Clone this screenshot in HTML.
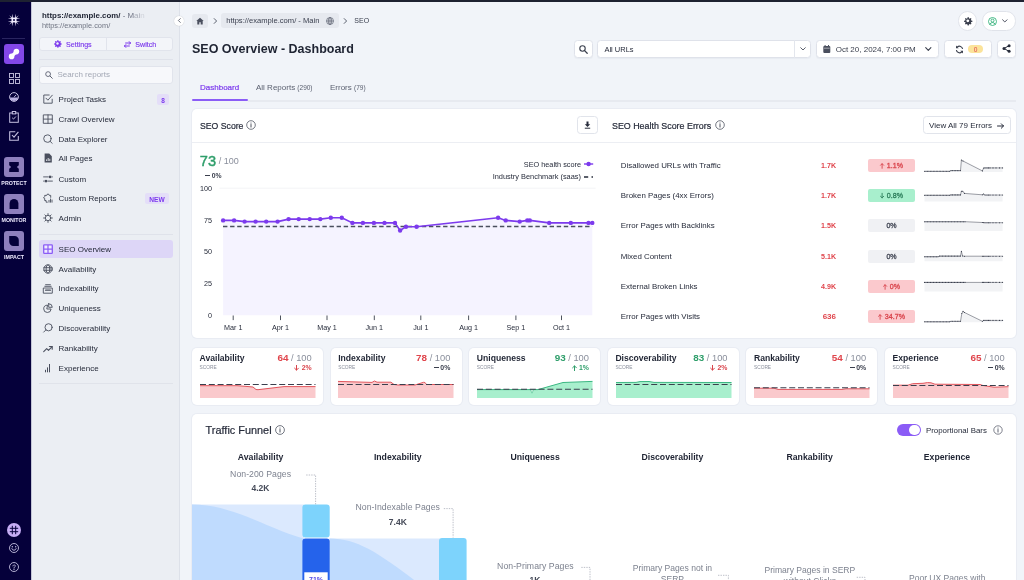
<!DOCTYPE html>
<html>
<head>
<meta charset="utf-8">
<title>SEO Overview - Dashboard</title>
<style>
*{box-sizing:border-box;margin:0;padding:0}
html,body{width:1024px;height:580px;overflow:hidden}
body{font-family:"Liberation Sans",sans-serif;background:#f1f4f9;color:#1f2433;position:relative;font-size:8px}
#app{position:absolute;left:0;top:0;width:1024px;height:580px;will-change:transform}
.a{position:absolute}
.t{position:absolute;white-space:nowrap;line-height:10px;height:10px}
.c{text-align:center}
.r{text-align:right}
.b{font-weight:700}
.card{position:absolute;background:#fff;border-radius:5px;box-shadow:0 0 0 1px rgba(226,230,238,.55)}
svg{position:absolute;overflow:visible}
</style>
</head>
<body>
<div id="app">
<div class="a" style="left:0px;top:0px;width:31px;height:580px;background:#05003a;"></div>
<div class="a" style="left:0px;top:0px;width:1024px;height:2px;background:#1e2231;"></div>
<div class="a" style="left:31px;top:2px;width:149px;height:578px;background:#ebeef3;border-right:1px solid #dde1e9;border-left:1px solid #c3c5d6;"></div>
<svg style="left:7px;top:13px;" width="14" height="14" viewBox="0 0 14 14"><g fill="#f3eeff">
<path d="M5.3 .8L6.2 7 5.3 13.2 4.4 7z"/><path d="M8.7 .8L9.6 7 8.7 13.2 7.8 7z"/>
<path d="M.8 5.3L7 4.4 13.2 5.3 7 6.2z"/><path d="M.8 8.7L7 7.8 13.2 8.7 7 9.6z"/>
<path d="M2.2 2.2L5 4.4 4.4 5zM11.8 2.2L9 4.4 9.6 5zM2.2 11.8L5 9.6 4.4 9zM11.8 11.8L9 9.6 9.6 9z"/></g></svg>
<div class="a" style="left:2px;top:38px;width:23px;height:1px;background:#2a2560;"></div>
<div class="a" style="left:4px;top:44px;width:20px;height:20px;background:#8347e8;border-radius:3px;"></div>
<svg style="left:8px;top:48px;" width="12" height="12" viewBox="0 0 12 12"><path d="M3.6 8.4L8.4 3.6" stroke="#fff" stroke-width="3.3" stroke-linecap="round"/><circle cx="3.6" cy="8.4" r="2.8" fill="#fff"/><circle cx="8.4" cy="3.6" r="2.8" fill="#fff"/></svg>
<svg style="left:8.5px;top:72.5px;" width="11" height="11" viewBox="0 0 11 11"><g fill="none" stroke="#c9c5e3" stroke-width=".9"><rect x=".5" y=".5" width="4" height="4"/><rect x="6.5" y=".5" width="4" height="4"/><rect x=".5" y="6.5" width="4" height="4"/><rect x="6.5" y="6.5" width="4" height="4"/></g></svg>
<svg style="left:9px;top:92px;" width="10" height="10" viewBox="0 0 10 10"><circle cx="5" cy="5" r="4.4" fill="none" stroke="#c4bfe0" stroke-width="1"/><path d="M.8 5.6h8.4a4.3 4.3 0 0 1-8.4 0z" fill="#b9b0e0"/><path d="M5 5.2l2.2-2.4" stroke="#c4bfe0" stroke-width=".9"/></svg>
<svg style="left:9px;top:111px;" width="10" height="12" viewBox="0 0 10 12"><g fill="none" stroke="#c4bfe0" stroke-width="1"><rect x=".7" y="2" width="8.6" height="9.3"/><rect x="3.3" y=".5" width="3.4" height="2.4" fill="#05003a"/><path d="M3.2 6.8l1.3 1.3 2.4-2.6"/></g></svg>
<svg style="left:9px;top:131px;" width="10" height="10" viewBox="0 0 10 10"><g fill="none" stroke="#c4bfe0" stroke-width="1.1"><path d="M9.3 5v4.3H.7V.7h5.6"/><path d="M3 4l2 2.2L9.4.8"/></g></svg>
<div class="a" style="left:4px;top:157px;width:20px;height:20px;background:#8e7fbd;border-radius:3px;"></div>
<svg style="left:4px;top:157px;" width="20" height="20" viewBox="0 0 20 20"><path d="M5.2 5h9.6v3.2l-2 1.8 2 1.8V15H5.2v-3.2l2-1.8-2-1.8z" fill="#05003a"/></svg>
<div class="t" style="top:178px;font-size:5.3px;color:#efeaff;font-weight:700;left:-136px;width:300px;text-align:center;">PROTECT</div>
<div class="a" style="left:4px;top:194px;width:20px;height:20px;background:#8e7fbd;border-radius:3px;"></div>
<svg style="left:4px;top:194px;" width="20" height="20" viewBox="0 0 20 20"><path d="M5.6 15V9.4a4.4 4.4 0 0 1 8.8 0V15z" fill="#05003a"/></svg>
<div class="t" style="top:215px;font-size:5.3px;color:#efeaff;font-weight:700;left:-136px;width:300px;text-align:center;">MONITOR</div>
<div class="a" style="left:4px;top:231px;width:20px;height:20px;background:#8e7fbd;border-radius:3px;"></div>
<svg style="left:4px;top:231px;" width="20" height="20" viewBox="0 0 20 20"><path d="M5.2 5h5.4a4.2 4.2 0 0 1 4.2 4.2V15H9.4a4.2 4.2 0 0 1-4.2-4.2z" fill="#05003a"/></svg>
<div class="t" style="top:252px;font-size:5.3px;color:#efeaff;font-weight:700;left:-136px;width:300px;text-align:center;">IMPACT</div>
<svg style="left:7px;top:523px;" width="14" height="14" viewBox="0 0 14 14"><circle cx="7" cy="7" r="7" fill="#c7aef6"/><g stroke="#05003a" stroke-width="1" stroke-linecap="round"><path d="M5.3 3.2v7.6M8.7 3.2v7.6M3.2 5.3h7.6M3.2 8.7h7.6"/></g></svg>
<svg style="left:9px;top:543px;" width="10" height="10" viewBox="0 0 10 10"><g fill="none" stroke="#c4bfe0" stroke-width=".9"><circle cx="5" cy="5" r="4.5"/><path d="M2.8 5.6a2.3 2.3 0 0 0 4.4 0" stroke-linecap="round"/></g><circle cx="3.3" cy="3.8" r=".7" fill="#c4bfe0"/><circle cx="6.7" cy="3.8" r=".7" fill="#c4bfe0"/></svg>
<svg style="left:9px;top:562px;" width="10" height="10" viewBox="0 0 10 10"><g fill="none" stroke="#c4bfe0" stroke-width=".9"><circle cx="5" cy="5" r="4.5"/><path d="M3.9 3.9a1.2 1.2 0 1 1 1.7 1.2c-.4.3-.6.5-.6 1" stroke-linecap="round"/></g><circle cx="5" cy="7.4" r=".55" fill="#c4bfe0"/></svg>
<div class="t" style="top:11px;font-size:7.9px;color:#1f2433;font-weight:700;left:42px;">https://example.com/ <span style="font-weight:400;color:#6b7080">- M</span><span style="font-weight:400;color:#a9adb8">ai</span><span style="font-weight:400;color:#cfd2da">n</span></div>
<div class="t" style="top:21px;font-size:7.4px;color:#6f7482;left:42px;">https://example.com/</div>
<div class="a" style="left:39.3px;top:36.8px;width:133.5px;height:14.6px;background:#f3f5f9;border:1px solid #e1e4ec;border-radius:3px;"></div>
<div class="a" style="left:106px;top:37px;width:1px;height:14.2px;background:#e1e4ec;"></div>
<svg style="left:53.5px;top:40.2px;" width="7" height="7" viewBox="0 0 7 7"><path fill="#7c3aed" d="M3.5 0l.9.2.2 1 .7.3.9-.5.7.7-.5.9.3.7 1 .2.0 1-1 .2-.3.7.5.9-.7.7-.9-.5-.7.3-.2 1h-1l-.2-1-.7-.3-.9.5-.7-.7.5-.9-.3-.7-1-.2v-1l1-.2.3-.7-.5-.9.7-.7.9.5.7-.3.2-1z"/><circle cx="3.5" cy="3.5" r="1.2" fill="#f3f5f9"/></svg>
<div class="t" style="top:40px;font-size:7.1px;color:#7c3aed;left:66px;-webkit-text-stroke:.15px #7c3aed;">Settings</div>
<svg style="left:123.5px;top:40.5px;" width="7" height="7" viewBox="0 0 7 7"><g fill="none" stroke="#7c3aed" stroke-width="1" stroke-linecap="round" stroke-linejoin="round"><path d="M1.6 2h5M5.2.6L6.6 2 5.2 3.4"/><path d="M5.4 5H.4M1.8 3.6L.4 5l1.4 1.4"/></g></svg>
<div class="t" style="top:40px;font-size:7.1px;color:#7c3aed;left:135.3px;-webkit-text-stroke:.15px #7c3aed;">Switch</div>
<div class="a" style="left:39px;top:59px;width:134px;height:1px;background:#dfe2ea;"></div>
<div class="a" style="left:39.3px;top:65.5px;width:133.5px;height:18.6px;background:#f7f8fb;border:1px solid #e1e4ec;border-radius:3px;"></div>
<svg style="left:45px;top:71px;" width="8" height="8" viewBox="0 0 8 8"><circle cx="3.1" cy="3.1" r="2.4" fill="none" stroke="#5b6070" stroke-width=".9"/><path d="M5 5l2.300 2.300" stroke="#5b6070" stroke-width="1" stroke-linecap="round"/></svg>
<div class="t" style="top:70px;font-size:8px;color:#a3a8b5;left:57.5px;">Search reports</div>
<svg style="left:43px;top:94.4px;" width="10" height="10" viewBox="0 0 10 10"><g fill="none" stroke="#4a4f5e" stroke-width=".9" stroke-linejoin="round" stroke-linecap="round"><path d="M9.2 5.2v4H.8V1h5.4"/><path d="M3 4.2l1.9 2L9.3 1.2"/></g></svg>
<div class="t" style="top:95px;font-size:8px;color:#262b3a;left:58.6px;">Project Tasks</div>
<svg style="left:43px;top:114.2px;" width="10" height="10" viewBox="0 0 10 10"><g fill="none" stroke="#4a4f5e" stroke-width=".9" stroke-linejoin="round" stroke-linecap="round"><rect x=".7" y=".9" width="8.6" height="8.4"/><path d="M5 .9v8.4M.7 5.1h8.6"/></g></svg>
<div class="t" style="top:115px;font-size:8px;color:#262b3a;left:58.6px;">Crawl Overview</div>
<svg style="left:43px;top:134px;" width="10" height="10" viewBox="0 0 10 10"><g fill="none" stroke="#4a4f5e" stroke-width=".9" stroke-linejoin="round" stroke-linecap="round"><circle cx="4.4" cy="4.6" r="3.7"/><path d="M7.1 7.3l2.1 2"/></g></svg>
<div class="t" style="top:135px;font-size:8px;color:#262b3a;left:58.6px;">Data Explorer</div>
<svg style="left:43px;top:153.3px;" width="10" height="10" viewBox="0 0 10 10"><path d="M1.6.6h4.6l2.6 2.6v6.2H1.6z" fill="#4a4f5e"/><path d="M3.6 8V6.4M5.2 8V5M6.8 8V5.8" stroke="#ebeef3" stroke-width=".9"/></svg>
<div class="t" style="top:154px;font-size:8px;color:#262b3a;left:58.6px;">All Pages</div>
<svg style="left:43px;top:173.8px;" width="10" height="10" viewBox="0 0 10 10"><g fill="none" stroke="#4a4f5e" stroke-width=".9" stroke-linejoin="round" stroke-linecap="round"><path d="M.6 2.900h4.800M8.800 2.900h.6M.6 7.100h.6M4.600 7.100h4.800"/></g><rect x="6" y="1.700" width="2.200" height="2.400" fill="#4a4f5e"/><rect x="1.800" y="5.900" width="2.200" height="2.400" fill="#4a4f5e"/></svg>
<div class="t" style="top:175px;font-size:8px;color:#262b3a;left:58.6px;">Custom</div>
<svg style="left:43px;top:193.3px;" width="10" height="10" viewBox="0 0 10 10"><g fill="none" stroke="#4a4f5e" stroke-width=".9" stroke-linejoin="round" stroke-linecap="round"><path d="M4.3 9.2H3.1V7.5H1.7V5.4L.5 4.9 1.7 3.6V2.4h2A1.3 1.3 0 0 1 6.300 2.4h1.4v1.9"/><path d="M6 9.200V7.400M7.500 9.200V6M9 9.200V7" stroke-width=".9"/></g></svg>
<div class="t" style="top:194px;font-size:8px;color:#262b3a;left:58.6px;">Custom Reports</div>
<svg style="left:43px;top:213.3px;" width="10" height="10" viewBox="0 0 10 10"><g fill="none" stroke="#4a4f5e" stroke-width=".9" stroke-linejoin="round" stroke-linecap="round"><circle cx="5" cy="5" r="2.7" stroke-width=".9"/><path d="M5 .6v1.200M5 8.200v1.200M.6 5h1.200M8.200 5h1.200M1.900 1.900l.8.8M7.300 7.300l.8.8M8.100 1.900l-.8.8M2.700 7.300l-.8.8" stroke-width=".9"/></g></svg>
<div class="t" style="top:214px;font-size:8px;color:#262b3a;left:58.6px;">Admin</div>
<div class="a" style="left:157px;top:93.6px;width:12px;height:11.8px;background:#e4def8;border-radius:2px;"></div>
<div class="t" style="top:96px;font-size:6.5px;color:#7c3aed;font-weight:700;left:13px;width:300px;text-align:center;">8</div>
<div class="a" style="left:145px;top:192.7px;width:24px;height:11.8px;background:#e4def8;border-radius:2px;"></div>
<div class="t" style="top:195px;font-size:6.6px;color:#7c3aed;font-weight:700;left:7px;width:300px;text-align:center;">NEW</div>
<div class="a" style="left:39px;top:234px;width:134px;height:1px;background:#dfe2ea;"></div>
<div class="a" style="left:39px;top:240px;width:134px;height:18.4px;background:#ddd6f7;border-radius:3px;"></div>
<svg style="left:43px;top:244.2px;" width="10" height="10" viewBox="0 0 10 10"><rect x=".7" y=".9" width="8.6" height="8.4" rx=".6" fill="#efeaff" stroke="#8b5cf6" stroke-width="1.3"/><path d="M5 .9v8.4M.7 5.1h8.6" stroke="#8b5cf6" stroke-width="1.2"/></svg>
<div class="t" style="top:245px;font-size:8px;color:#1f2433;left:58.6px;">SEO Overview</div>
<svg style="left:43px;top:264.2px;" width="10" height="10" viewBox="0 0 10 10"><g fill="none" stroke="#4a4f5e" stroke-width=".9" stroke-linejoin="round" stroke-linecap="round"><circle cx="5" cy="5" r="4.2"/><ellipse cx="5" cy="5" rx="1.9" ry="4.2"/><path d="M.9 3.700h8.200M.9 6.300h8.200" stroke-width=".9"/></g></svg>
<div class="t" style="top:265px;font-size:8px;color:#262b3a;left:58.6px;">Availability</div>
<svg style="left:43px;top:283.5px;" width="10" height="10" viewBox="0 0 10 10"><g fill="none" stroke="#4a4f5e" stroke-width=".9" stroke-linejoin="round" stroke-linecap="round"><path d="M2.600 .700h4.800M1.800 2.300h6.400" stroke-width=".9"/><rect x=".7" y="4" width="8.600" height="5.200"/><path d="M2.600 6.200h4.800" stroke-width="1.300"/></g></svg>
<div class="t" style="top:284px;font-size:8px;color:#262b3a;left:58.6px;">Indexability</div>
<svg style="left:43px;top:303.3px;" width="10" height="10" viewBox="0 0 10 10"><g fill="none" stroke="#4a4f5e" stroke-width=".9" stroke-linejoin="round" stroke-linecap="round"><path d="M4.200 2.100A3.700 3.700 0 1 0 8.100 6H4.200z"/><path d="M5.700 .700v3.600h3.600A3.600 3.600 0 0 0 5.700 .700z"/></g></svg>
<div class="t" style="top:304px;font-size:8px;color:#262b3a;left:58.6px;">Uniqueness</div>
<svg style="left:43px;top:323.3px;" width="10" height="10" viewBox="0 0 10 10"><g fill="none" stroke="#4a4f5e" stroke-width=".9" stroke-linejoin="round" stroke-linecap="round"><circle cx="5.600" cy="4.300" r="3.600"/><path d="M2.900 6.900L.7 9.100"/></g></svg>
<div class="t" style="top:324px;font-size:8px;color:#262b3a;left:58.6px;">Discoverability</div>
<svg style="left:43px;top:343.5px;" width="10" height="10" viewBox="0 0 10 10"><g fill="none" stroke="#4a4f5e" stroke-width=".9" stroke-linejoin="round" stroke-linecap="round"><path d="M.7 7.600l3-3 1.800 1.700L9.100 2.700" stroke-width="1.100"/><path d="M6.400 2.500h2.800v2.800" stroke-width="1.100"/></g></svg>
<div class="t" style="top:344px;font-size:8px;color:#262b3a;left:58.6px;">Rankability</div>
<svg style="left:43px;top:363.3px;" width="10" height="10" viewBox="0 0 10 10"><g fill="none" stroke="#4a4f5e" stroke-width=".9" stroke-linejoin="round" stroke-linecap="round"><path d="M2.500 9.300V6.800M4.500 9.300V4.400M6.500 9.300V1" stroke-linecap="butt" stroke-width="1"/></g></svg>
<div class="t" style="top:364px;font-size:8px;color:#262b3a;left:58.6px;">Experience</div>
<div class="a" style="left:39px;top:383px;width:134px;height:1px;background:#e0e3ea;"></div>
<div class="a" style="left:174px;top:15.5px;width:10px;height:10px;background:#fff;border-radius:50%;box-shadow:0 0 1px rgba(0,0,0,.25);"></div>
<svg style="left:176.5px;top:18px;" width="5" height="5" viewBox="0 0 5 5"><path d="M3.3 .6L1.4 2.5l1.900 1.900" fill="none" stroke="#4a4f5e" stroke-width=".8" stroke-linecap="round" stroke-linejoin="round"/></svg>
<div class="a" style="left:192px;top:13.5px;width:15.8px;height:14px;background:#e6e9ef;border-radius:3px;"></div>
<svg style="left:196px;top:16.5px;" width="8" height="8" viewBox="0 0 8 8"><path d="M4 .7L.3 4h1v3.500h2V5.200h1.400V7.500h2V4h1z" fill="#4a4f5e"/></svg>
<svg style="left:212.5px;top:17.8px;" width="5" height="6" viewBox="0 0 5 6"><path d="M1.200 .6l2.400 2.400-2.400 2.400" fill="none" stroke="#4a4f5e" stroke-width=".9" stroke-linecap="round" stroke-linejoin="round"/></svg>
<div class="a" style="left:221px;top:13.2px;width:117.7px;height:14.6px;background:#e6e9ef;border-radius:3px;"></div>
<div class="t" style="top:16px;font-size:7.6px;color:#3c4150;left:226.2px;">https://example.com/ - Main</div>
<svg style="left:326.3px;top:16.6px;" width="8" height="8" viewBox="0 0 8 8"><g fill="none" stroke="#555a69" stroke-width=".65"><circle cx="4" cy="4" r="3.500"/><ellipse cx="4" cy="4" rx="1.700" ry="3.500"/><path d="M.5 4h7M4 .5v7"/></g></svg>
<svg style="left:343.3px;top:17.8px;" width="5" height="6" viewBox="0 0 5 6"><path d="M1.200 .6l2.400 2.400-2.400 2.400" fill="none" stroke="#4a4f5e" stroke-width=".9" stroke-linecap="round" stroke-linejoin="round"/></svg>
<div class="t" style="top:16px;font-size:7px;color:#3c4150;left:354.3px;">SEO</div>
<div class="t" style="top:44px;font-size:12.5px;color:#1f2433;font-weight:700;left:192px;line-height:14px;height:14px;margin-top:-2px;">SEO Overview - Dashboard</div>
<div class="a" style="left:957.8px;top:11.4px;width:19.2px;height:19.2px;background:#fff;border-radius:50%;border:1px solid #e0e3ea;"></div>
<svg style="left:963.6px;top:17.2px;" width="7.6" height="7.6" viewBox="0 0 7 7"><path fill="#3a3f4d" d="M3.500 0l.9.2.2 1 .7.3.9-.5.7.7-.5.9.3.7 1 .2v1l-1 .2-.3.7.5.9-.7.7-.9-.5-.7.3-.2 1h-1l-.2-1-.7-.3-.9.5-.7-.7.5-.9-.3-.7-1-.2v-1l1-.2.3-.7-.5-.9.7-.7.9.5.7-.3.2-1z"/><circle cx="3.500" cy="3.500" r="1.300" fill="#fff"/></svg>
<div class="a" style="left:982px;top:11.4px;width:33.5px;height:19.2px;background:#fff;border-radius:9.600px;border:1px solid #e0e3ea;"></div>
<svg style="left:988px;top:16.8px;" width="9" height="9" viewBox="0 0 9 9"><g fill="none" stroke="#34b27b" stroke-width=".9"><circle cx="4.500" cy="4.500" r="4"/><circle cx="4.500" cy="3.600" r="1.500"/><path d="M1.900 7.300a2.800 2.800 0 0 1 5.200 0"/></g></svg>
<svg style="left:1001.7px;top:19.3px;" width="5.6" height="4" viewBox="0 0 5.6 4"><path d="M.6 .8l2.200 2.200L5 .8" fill="none" stroke="#4a4f5e" stroke-width="1" stroke-linecap="round" stroke-linejoin="round"/></svg>
<div class="a" style="left:574px;top:39.7px;width:18.5px;height:18.5px;background:#fff;border:1px solid #dfe2ea;border-radius:3.500px;box-shadow:0 1px 1px rgba(30,40,70,.04);"></div>
<svg style="left:579px;top:44.7px;" width="9" height="9" viewBox="0 0 9 9"><circle cx="3.500" cy="3.500" r="2.700" fill="none" stroke="#3a3f4d" stroke-width="1.100"/><path d="M5.600 5.600l2.600 2.600" stroke="#3a3f4d" stroke-width="1.300" stroke-linecap="round"/></svg>
<div class="a" style="left:597.4px;top:39.5px;width:214px;height:18.7px;background:#fff;border:1px solid #dfe2ea;border-radius:3.500px;box-shadow:0 1px 1px rgba(30,40,70,.04);"></div>
<div class="a" style="left:794px;top:40px;width:1px;height:17.7px;background:#e3e6ed;"></div>
<div class="t" style="top:45px;font-size:7.5px;color:#262b3a;left:604.4px;">All URLs</div>
<svg style="left:800.3px;top:47px;" width="6" height="4" viewBox="0 0 6 4"><path d="M.7 .7l2.300 2.300L5.300 .7" fill="none" stroke="#4a4f5e" stroke-width=".9" stroke-linecap="round" stroke-linejoin="round"/></svg>
<div class="a" style="left:815.8px;top:39.6px;width:123.2px;height:18.6px;background:#fff;border:1px solid #dfe2ea;border-radius:3.500px;box-shadow:0 1px 1px rgba(30,40,70,.04);"></div>
<svg style="left:823px;top:44.7px;" width="7.6" height="8.4" viewBox="0 0 7.6 8.4"><rect x=".3" y="1" width="7" height="7" rx="1" fill="#4a4f5e"/><rect x="1.600" y="0" width="1" height="2" fill="#4a4f5e"/><rect x="5" y="0" width="1" height="2" fill="#4a4f5e"/><rect x=".9" y="2.800" width="5.800" height=".7" fill="#fff" opacity=".7"/></svg>
<div class="t" style="top:45px;font-size:8px;color:#3a3f4d;left:835.7px;">Oct 20, 2024, 7:00 PM</div>
<svg style="left:924.7px;top:46.8px;" width="6.6" height="4.4" viewBox="0 0 6.6 4.4"><path d="M.7 .7l2.600 2.600L5.900 .7" fill="none" stroke="#3a3f4d" stroke-width="1.100" stroke-linecap="round" stroke-linejoin="round"/></svg>
<div class="a" style="left:943.7px;top:39.6px;width:48.4px;height:18.6px;background:#fff;border:1px solid #dfe2ea;border-radius:3.500px;box-shadow:0 1px 1px rgba(30,40,70,.04);"></div>
<svg style="left:954.7px;top:44.6px;" width="9" height="9" viewBox="0 0 9 9"><g fill="none" stroke="#3a3f4d" stroke-width="1.100"><path d="M7.600 4A3.200 3.200 0 0 0 2.300 2"/><path d="M1.400 5a3.200 3.200 0 0 0 5.300 2"/></g><path d="M1 .6v2.700h2.700zM8 8.400V5.700H5.300z" fill="#3a3f4d"/></svg>
<div class="a" style="left:968px;top:45.3px;width:15.3px;height:8px;background:#fbe39a;border-radius:4px;"></div>
<div class="t" style="top:45px;font-size:6.6px;color:#e0454c;left:825.65px;width:300px;text-align:center;">0</div>
<div class="a" style="left:996.9px;top:39.6px;width:18.7px;height:18.6px;background:#fff;border:1px solid #dfe2ea;border-radius:3.500px;box-shadow:0 1px 1px rgba(30,40,70,.04);"></div>
<svg style="left:1001.5px;top:44.4px;" width="9" height="9" viewBox="0 0 9 9"><path d="M2 4.500L7 1.700M2 4.500L7 7.300" stroke="#262b3a" stroke-width="1" fill="none"/><circle cx="2" cy="4.500" r="1.500" fill="#262b3a"/><circle cx="7.100" cy="1.700" r="1.500" fill="#262b3a"/><circle cx="7.100" cy="7.300" r="1.500" fill="#262b3a"/></svg>
<div class="t" style="top:83px;font-size:8px;color:#7c3aed;left:200px;-webkit-text-stroke:.2px #7c3aed;">Dashboard</div>
<div class="a" style="left:192px;top:99.3px;width:56px;height:2.2px;background:#8b5cf6;border-radius:1px;"></div>
<div class="a" style="left:248px;top:100px;width:768px;height:1.6px;background:#e7eaf0;"></div>
<div class="t" style="top:83px;font-size:8px;color:#5b6070;left:256px;">All Reports <span style="font-size:6.500px">(290)</span></div>
<div class="t" style="top:83px;font-size:8px;color:#5b6070;left:330px;">Errors <span style="font-size:6.500px">(79)</span></div>
<div class="card" style="left:192px;top:109px;width:824px;height:229px"></div>
<div class="a" style="left:192px;top:142px;width:824px;height:1px;background:#eceef3;"></div>
<div class="t" style="top:121px;font-size:8.7px;color:#262b3a;left:200px;-webkit-text-stroke:.2px #262b3a;">SEO Score</div>
<svg style="left:246.3px;top:119.8px;" width="10" height="10" viewBox="0 0 10 10"><circle cx="5" cy="5" r="4.3" fill="none" stroke="#3a3f4d" stroke-width=".7"/><path d="M5 4.500v2.600" stroke="#3a3f4d" stroke-width=".9" stroke-linecap="round"/><circle cx="5" cy="3" r=".55" fill="#3a3f4d"/></svg>
<div class="a" style="left:577.4px;top:116px;width:21px;height:17.5px;background:#fff;border:1px solid #e1e4eb;border-radius:3.500px;"></div>
<svg style="left:584.4px;top:121px;" width="7" height="8" viewBox="0 0 7 8"><path d="M2.500 .5h2v2.700h1.700L3.500 5.900.8 3.200h1.700z" fill="#262b3a"/><rect x=".8" y="6.700" width="5.400" height="1" fill="#262b3a"/></svg>
<div class="t" style="top:156px;font-size:14.6px;color:#2e9e6a;left:199.8px;line-height:16px;height:16px;margin-top:-3px;-webkit-text-stroke:.45px #2e9e6a;">73</div>
<div class="t" style="top:156px;font-size:9px;color:#8a8f9c;left:218.8px;">/ 100</div>
<div class="a" style="left:205.3px;top:174.9px;width:5px;height:0.9px;background:#3a3f4d;"></div>
<div class="t" style="top:171px;font-size:6.8px;color:#3a3f4d;font-weight:700;left:211.8px;">0%</div>
<div class="t" style="top:160px;font-size:7.3px;color:#262b3a;right:443px;text-align:right;">SEO health score</div>
<svg style="left:583.7px;top:161.4px;" width="9.2" height="6" viewBox="0 0 9.2 6"><path d="M0 3h9.200" stroke="#7c3aed" stroke-width="1.400"/><circle cx="4.600" cy="3" r="2.200" fill="#7c3aed"/></svg>
<div class="t" style="top:172px;font-size:7.4px;color:#262b3a;right:443px;text-align:right;">Industry Benchmark (saas)</div>
<svg style="left:583.9px;top:174.2px;" width="10" height="6" viewBox="0 0 10 6"><path d="M0 3h4.200M7.500 3h1.500" stroke="#262b3a" stroke-width="1.300"/></svg>
<div class="t" style="top:184px;font-size:7.2px;color:#262b3a;right:812.1px;text-align:right;">100</div>
<div class="t" style="top:216px;font-size:7.2px;color:#262b3a;right:812.1px;text-align:right;">75</div>
<div class="t" style="top:247px;font-size:7.2px;color:#262b3a;right:812.1px;text-align:right;">50</div>
<div class="t" style="top:279px;font-size:7.2px;color:#262b3a;right:812.1px;text-align:right;">25</div>
<div class="t" style="top:311px;font-size:7.2px;color:#262b3a;right:812.1px;text-align:right;">0</div>
<svg style="left:192px;top:180px;" width="412" height="150" viewBox="0 0 412 150"><path d="M27.500 8.2H403.600" stroke="#f0f1f5" stroke-width=".8"/><path d="M31.1 40.4 L42.1 40.4 L52.6 41.6 L63.6 41.6 L74.2 41.6 L85.6 41.6 L96.6 39.1 L106.7 39.1 L117.7 39.1 L128.3 39.1 L138.8 37.8 L149.8 37.8 L160.4 42.9 L170.9 42.9 L181.9 42.9 L192.5 42.9 L203 42.9 L208.1 50.5 L214 46.7 L224.6 46.7 L306.1 37.8 L313.7 40.4 L327.7 41.6 L335.3 40.4 L337.8 40.4 L357.2 42.9 L378.8 42.9 L396.5 42.9 L400.3 42.9 L400.3 135.2 L31.1 135.2 Z" fill="#f5f3ff"/><path d="M31 46.500H400.300" stroke="#4a4f5e" stroke-width="1.300" stroke-dasharray="4.400 2.700"/><path d="M31.1 40.4 L42.1 40.4 L52.6 41.6 L63.6 41.6 L74.2 41.6 L85.6 41.6 L96.6 39.1 L106.7 39.1 L117.7 39.1 L128.3 39.1 L138.8 37.8 L149.8 37.8 L160.4 42.9 L170.9 42.9 L181.9 42.9 L192.5 42.9 L203 42.9 L208.1 50.5 L214 46.7 L224.6 46.7 L306.1 37.8 L313.7 40.4 L327.7 41.6 L335.3 40.4 L337.8 40.4 L357.2 42.9 L378.8 42.9 L396.5 42.9 L400.3 42.9" fill="none" stroke="#7c3aed" stroke-width="1.600" stroke-linejoin="round"/><circle cx="31.1" cy="40.4" r="2.200" fill="#7c3aed"/><circle cx="42.1" cy="40.4" r="2.200" fill="#7c3aed"/><circle cx="52.6" cy="41.6" r="2.200" fill="#7c3aed"/><circle cx="63.6" cy="41.6" r="2.200" fill="#7c3aed"/><circle cx="74.2" cy="41.6" r="2.200" fill="#7c3aed"/><circle cx="85.6" cy="41.6" r="2.200" fill="#7c3aed"/><circle cx="96.6" cy="39.1" r="2.200" fill="#7c3aed"/><circle cx="106.7" cy="39.1" r="2.200" fill="#7c3aed"/><circle cx="117.7" cy="39.1" r="2.200" fill="#7c3aed"/><circle cx="128.3" cy="39.1" r="2.200" fill="#7c3aed"/><circle cx="138.8" cy="37.8" r="2.200" fill="#7c3aed"/><circle cx="149.8" cy="37.8" r="2.200" fill="#7c3aed"/><circle cx="160.4" cy="42.9" r="2.200" fill="#7c3aed"/><circle cx="170.9" cy="42.9" r="2.200" fill="#7c3aed"/><circle cx="181.9" cy="42.9" r="2.200" fill="#7c3aed"/><circle cx="192.5" cy="42.9" r="2.200" fill="#7c3aed"/><circle cx="203" cy="42.9" r="2.200" fill="#7c3aed"/><circle cx="208.1" cy="50.5" r="2.200" fill="#7c3aed"/><circle cx="214" cy="46.7" r="2.200" fill="#7c3aed"/><circle cx="224.6" cy="46.7" r="2.200" fill="#7c3aed"/><circle cx="306.1" cy="37.8" r="2.200" fill="#7c3aed"/><circle cx="313.7" cy="40.4" r="2.200" fill="#7c3aed"/><circle cx="327.7" cy="41.6" r="2.200" fill="#7c3aed"/><circle cx="335.3" cy="40.4" r="2.200" fill="#7c3aed"/><circle cx="337.8" cy="40.4" r="2.200" fill="#7c3aed"/><circle cx="357.2" cy="42.9" r="2.200" fill="#7c3aed"/><circle cx="378.8" cy="42.9" r="2.200" fill="#7c3aed"/><circle cx="396.5" cy="42.9" r="2.200" fill="#7c3aed"/><circle cx="400.3" cy="42.9" r="2.200" fill="#7c3aed"/><path d="M41.2 135.500v4.600" stroke="#3a3f4d" stroke-width=".9"/><path d="M88.5 135.500v4.600" stroke="#3a3f4d" stroke-width=".9"/><path d="M135 135.500v4.600" stroke="#3a3f4d" stroke-width=".9"/><path d="M182.3 135.500v4.600" stroke="#3a3f4d" stroke-width=".9"/><path d="M228.8 135.500v4.600" stroke="#3a3f4d" stroke-width=".9"/><path d="M276.6 135.500v4.600" stroke="#3a3f4d" stroke-width=".9"/><path d="M323.9 135.500v4.600" stroke="#3a3f4d" stroke-width=".9"/><path d="M369.5 135.500v4.600" stroke="#3a3f4d" stroke-width=".9"/></svg>
<div class="t" style="top:323px;font-size:7.2px;color:#262b3a;left:83.19999999999999px;width:300px;text-align:center;">Mar 1</div>
<div class="t" style="top:323px;font-size:7.2px;color:#262b3a;left:130.5px;width:300px;text-align:center;">Apr 1</div>
<div class="t" style="top:323px;font-size:7.2px;color:#262b3a;left:177px;width:300px;text-align:center;">May 1</div>
<div class="t" style="top:323px;font-size:7.2px;color:#262b3a;left:224.3px;width:300px;text-align:center;">Jun 1</div>
<div class="t" style="top:323px;font-size:7.2px;color:#262b3a;left:270.8px;width:300px;text-align:center;">Jul 1</div>
<div class="t" style="top:323px;font-size:7.2px;color:#262b3a;left:318.6px;width:300px;text-align:center;">Aug 1</div>
<div class="t" style="top:323px;font-size:7.2px;color:#262b3a;left:365.9px;width:300px;text-align:center;">Sep 1</div>
<div class="t" style="top:323px;font-size:7.2px;color:#262b3a;left:411.5px;width:300px;text-align:center;">Oct 1</div>
<div class="t" style="top:121px;font-size:8.9px;color:#262b3a;left:612px;-webkit-text-stroke:.2px #262b3a;">SEO Health Score Errors</div>
<svg style="left:714.5px;top:119.8px;" width="10" height="10" viewBox="0 0 10 10"><circle cx="5" cy="5" r="4.3" fill="none" stroke="#3a3f4d" stroke-width=".7"/><path d="M5 4.500v2.600" stroke="#3a3f4d" stroke-width=".9" stroke-linecap="round"/><circle cx="5" cy="3" r=".55" fill="#3a3f4d"/></svg>
<div class="a" style="left:922.5px;top:116px;width:88px;height:17.5px;background:#fff;border:1px solid #e1e4eb;border-radius:3.500px;"></div>
<div class="t" style="top:121px;font-size:8px;color:#262b3a;left:929px;">View All 79 Errors</div>
<svg style="left:997px;top:122.5px;" width="8" height="6" viewBox="0 0 8 6"><path d="M.5 3h6M4.300 .8L6.500 3 4.300 5.200" fill="none" stroke="#262b3a" stroke-width="1" stroke-linecap="round" stroke-linejoin="round"/></svg>
<div class="t" style="top:161px;font-size:7.9px;color:#262b3a;left:620.8px;">Disallowed URLs with Traffic</div>
<div class="t" style="top:161px;font-size:7.1px;color:#e0454c;font-weight:700;right:188px;text-align:right;">1.7K</div>
<div class="a" style="left:868.4px;top:159px;width:46.3px;height:13px;background:#fbc9cd;border-radius:2px;"></div>
<div class="t" style="left:868.400px;width:46.300px;text-align:center;top:161px;font-size:7.100px;font-weight:400;-webkit-text-stroke:.28px #d9434b;color:#d9434b"><svg style="position:static;display:inline-block;vertical-align:-.3px;margin-right:2.600px" width="4.200" height="5.600" viewBox="0 0 4.200 5.600"><path d="M2.100 5.300V.8M.5 2.300L2.100 .7l1.600 1.600" fill="none" stroke="#d9434b" stroke-width=".9" stroke-linecap="round" stroke-linejoin="round"/></svg>1.1%</div>
<div class="t" style="top:191px;font-size:7.9px;color:#262b3a;left:620.8px;">Broken Pages (4xx Errors)</div>
<div class="t" style="top:191px;font-size:7.1px;color:#e0454c;font-weight:700;right:188px;text-align:right;">1.7K</div>
<div class="a" style="left:868.4px;top:189px;width:46.3px;height:13px;background:#a8efcd;border-radius:2px;"></div>
<div class="t" style="left:868.400px;width:46.300px;text-align:center;top:191px;font-size:7.100px;font-weight:400;-webkit-text-stroke:.28px #2b7d5a;color:#2b7d5a"><svg style="position:static;display:inline-block;vertical-align:-.3px;margin-right:2.600px" width="4.200" height="5.600" viewBox="0 0 4.200 5.600"><path d="M2.100 .3V4.800M.5 3.300L2.100 4.900l1.600-1.600" fill="none" stroke="#2b7d5a" stroke-width=".9" stroke-linecap="round" stroke-linejoin="round"/></svg>0.8%</div>
<div class="t" style="top:221px;font-size:7.9px;color:#262b3a;left:620.8px;">Error Pages with Backlinks</div>
<div class="t" style="top:221px;font-size:7.1px;color:#e0454c;font-weight:700;right:188px;text-align:right;">1.5K</div>
<div class="a" style="left:868.4px;top:219px;width:46.3px;height:13px;background:#f0f1f4;border-radius:2px;"></div>
<div class="t" style="left:868.400px;width:46.300px;text-align:center;top:221px;font-size:7.100px;font-weight:400;-webkit-text-stroke:.28px #3a3f4d;color:#3a3f4d">0%</div>
<div class="t" style="top:252px;font-size:7.9px;color:#262b3a;left:620.8px;">Mixed Content</div>
<div class="t" style="top:252px;font-size:7.1px;color:#e0454c;font-weight:700;right:188px;text-align:right;">5.1K</div>
<div class="a" style="left:868.4px;top:250px;width:46.3px;height:13px;background:#f0f1f4;border-radius:2px;"></div>
<div class="t" style="left:868.400px;width:46.300px;text-align:center;top:252px;font-size:7.100px;font-weight:400;-webkit-text-stroke:.28px #3a3f4d;color:#3a3f4d">0%</div>
<div class="t" style="top:282px;font-size:7.9px;color:#262b3a;left:620.8px;">External Broken Links</div>
<div class="t" style="top:282px;font-size:7.1px;color:#e0454c;font-weight:700;right:188px;text-align:right;">4.9K</div>
<div class="a" style="left:868.4px;top:280px;width:46.3px;height:13px;background:#fbc9cd;border-radius:2px;"></div>
<div class="t" style="left:868.400px;width:46.300px;text-align:center;top:282px;font-size:7.100px;font-weight:400;-webkit-text-stroke:.28px #d9434b;color:#d9434b"><svg style="position:static;display:inline-block;vertical-align:-.3px;margin-right:2.600px" width="4.200" height="5.600" viewBox="0 0 4.200 5.600"><path d="M2.100 5.300V.8M.5 2.300L2.100 .7l1.600 1.600" fill="none" stroke="#d9434b" stroke-width=".9" stroke-linecap="round" stroke-linejoin="round"/></svg>0%</div>
<div class="t" style="top:312px;font-size:7.9px;color:#262b3a;left:620.8px;">Error Pages with Visits</div>
<div class="t" style="top:312px;font-size:8px;color:#e0454c;font-weight:700;right:188px;text-align:right;">636</div>
<div class="a" style="left:868.4px;top:310px;width:46.3px;height:13px;background:#fbc9cd;border-radius:2px;"></div>
<div class="t" style="left:868.400px;width:46.300px;text-align:center;top:312px;font-size:7.100px;font-weight:400;-webkit-text-stroke:.28px #d9434b;color:#d9434b"><svg style="position:static;display:inline-block;vertical-align:-.3px;margin-right:2.600px" width="4.200" height="5.600" viewBox="0 0 4.200 5.600"><path d="M2.100 5.300V.8M.5 2.300L2.100 .7l1.600 1.600" fill="none" stroke="#d9434b" stroke-width=".9" stroke-linecap="round" stroke-linejoin="round"/></svg>34.7%</div>
<svg style="left:920px;top:155px;" width="90" height="20" viewBox="0 0 90 20"><path d="M4.5 16.3 L5.97 16.3 L7.44 16.3 L8.91 16.3 L10.38 16.3 L11.85 16.3 L13.32 16.3 L14.79 16.3 L16.26 16.3 L17.74 16.3 L19.21 16.3 L20.68 16.3 L22.15 16.3 L23.62 16.3 L25.09 16.3 L26.56 16.3 L28.03 16.3 L29.5 16.3 L31.0 15.6 L32.58 15.6 L34.17 15.6 L35.75 15.6 L37.33 15.6 L38.92 15.6 L40.5 15.6 L41.4 5 L43 6 L62.4 15.9 L63.6 13 L65 12.9 L67 12.9 L68.5 12.9 L70 12.9 L73 12.9 L76 12.9 L79.5 12.9 L82.6 12.9 L82.6 16.9 L4.5 16.9 Z" fill="#f2f3f5"/><path d="M4.5 16.3 L5.97 16.3 L7.44 16.3 L8.91 16.3 L10.38 16.3 L11.85 16.3 L13.32 16.3 L14.79 16.3 L16.26 16.3 L17.74 16.3 L19.21 16.3 L20.68 16.3 L22.15 16.3 L23.62 16.3 L25.09 16.3 L26.56 16.3 L28.03 16.3 L29.5 16.3 L31.0 15.6 L32.58 15.6 L34.17 15.6 L35.75 15.6 L37.33 15.6 L38.92 15.6 L40.5 15.6 L41.4 5 L43 6 L62.4 15.9 L63.6 13 L65 12.9 L67 12.9 L68.5 12.9 L70 12.9 L73 12.9 L76 12.9 L79.5 12.9 L82.6 12.9" fill="none" stroke="#3a3f4d" stroke-width=".5"/><circle cx="4.5" cy="16.3" r=".55" fill="#3a3f4d"/><circle cx="5.97" cy="16.3" r=".55" fill="#3a3f4d"/><circle cx="7.44" cy="16.3" r=".55" fill="#3a3f4d"/><circle cx="8.91" cy="16.3" r=".55" fill="#3a3f4d"/><circle cx="10.38" cy="16.3" r=".55" fill="#3a3f4d"/><circle cx="11.85" cy="16.3" r=".55" fill="#3a3f4d"/><circle cx="13.32" cy="16.3" r=".55" fill="#3a3f4d"/><circle cx="14.79" cy="16.3" r=".55" fill="#3a3f4d"/><circle cx="16.26" cy="16.3" r=".55" fill="#3a3f4d"/><circle cx="17.74" cy="16.3" r=".55" fill="#3a3f4d"/><circle cx="19.21" cy="16.3" r=".55" fill="#3a3f4d"/><circle cx="20.68" cy="16.3" r=".55" fill="#3a3f4d"/><circle cx="22.15" cy="16.3" r=".55" fill="#3a3f4d"/><circle cx="23.62" cy="16.3" r=".55" fill="#3a3f4d"/><circle cx="25.09" cy="16.3" r=".55" fill="#3a3f4d"/><circle cx="26.56" cy="16.3" r=".55" fill="#3a3f4d"/><circle cx="28.03" cy="16.3" r=".55" fill="#3a3f4d"/><circle cx="29.5" cy="16.3" r=".55" fill="#3a3f4d"/><circle cx="31.0" cy="15.6" r=".55" fill="#3a3f4d"/><circle cx="32.58" cy="15.6" r=".55" fill="#3a3f4d"/><circle cx="34.17" cy="15.6" r=".55" fill="#3a3f4d"/><circle cx="35.75" cy="15.6" r=".55" fill="#3a3f4d"/><circle cx="37.33" cy="15.6" r=".55" fill="#3a3f4d"/><circle cx="38.92" cy="15.6" r=".55" fill="#3a3f4d"/><circle cx="40.5" cy="15.6" r=".55" fill="#3a3f4d"/><circle cx="41.4" cy="5" r=".55" fill="#3a3f4d"/><circle cx="43" cy="6" r=".55" fill="#3a3f4d"/><circle cx="62.4" cy="15.9" r=".55" fill="#3a3f4d"/><circle cx="63.6" cy="13" r=".55" fill="#3a3f4d"/><circle cx="65" cy="12.9" r=".55" fill="#3a3f4d"/><circle cx="67" cy="12.9" r=".55" fill="#3a3f4d"/><circle cx="68.5" cy="12.9" r=".55" fill="#3a3f4d"/><circle cx="70" cy="12.9" r=".55" fill="#3a3f4d"/><circle cx="73" cy="12.9" r=".55" fill="#3a3f4d"/><circle cx="76" cy="12.9" r=".55" fill="#3a3f4d"/><circle cx="79.5" cy="12.9" r=".55" fill="#3a3f4d"/><circle cx="82.6" cy="12.9" r=".55" fill="#3a3f4d"/></svg>
<svg style="left:920px;top:185px;" width="90" height="20" viewBox="0 0 90 20"><path d="M4.5 10.2 L5.97 10.2 L7.44 10.2 L8.91 10.2 L10.38 10.2 L11.85 10.2 L13.32 10.2 L14.79 10.2 L16.26 10.2 L17.74 10.2 L19.21 10.2 L20.68 10.2 L22.15 10.2 L23.62 10.2 L25.09 10.2 L26.56 10.2 L28.03 10.2 L29.5 10.2 L31.0 9.9 L32.58 9.9 L34.17 9.9 L35.75 9.9 L37.33 9.9 L38.92 9.9 L40.5 9.9 L41.4 6.2 L42.8 6.3 L44.4 8.4 L62.4 9.8 L63.6 9 L65 10 L67 10 L68.5 10 L70 10 L73 10 L76 10 L79.5 10 L82.6 10 L82.6 16.4 L4.5 16.4 Z" fill="#f2f3f5"/><path d="M4.5 10.2 L5.97 10.2 L7.44 10.2 L8.91 10.2 L10.38 10.2 L11.85 10.2 L13.32 10.2 L14.79 10.2 L16.26 10.2 L17.74 10.2 L19.21 10.2 L20.68 10.2 L22.15 10.2 L23.62 10.2 L25.09 10.2 L26.56 10.2 L28.03 10.2 L29.5 10.2 L31.0 9.9 L32.58 9.9 L34.17 9.9 L35.75 9.9 L37.33 9.9 L38.92 9.9 L40.5 9.9 L41.4 6.2 L42.8 6.3 L44.4 8.4 L62.4 9.8 L63.6 9 L65 10 L67 10 L68.5 10 L70 10 L73 10 L76 10 L79.5 10 L82.6 10" fill="none" stroke="#3a3f4d" stroke-width=".5"/><circle cx="4.5" cy="10.2" r=".55" fill="#3a3f4d"/><circle cx="5.97" cy="10.2" r=".55" fill="#3a3f4d"/><circle cx="7.44" cy="10.2" r=".55" fill="#3a3f4d"/><circle cx="8.91" cy="10.2" r=".55" fill="#3a3f4d"/><circle cx="10.38" cy="10.2" r=".55" fill="#3a3f4d"/><circle cx="11.85" cy="10.2" r=".55" fill="#3a3f4d"/><circle cx="13.32" cy="10.2" r=".55" fill="#3a3f4d"/><circle cx="14.79" cy="10.2" r=".55" fill="#3a3f4d"/><circle cx="16.26" cy="10.2" r=".55" fill="#3a3f4d"/><circle cx="17.74" cy="10.2" r=".55" fill="#3a3f4d"/><circle cx="19.21" cy="10.2" r=".55" fill="#3a3f4d"/><circle cx="20.68" cy="10.2" r=".55" fill="#3a3f4d"/><circle cx="22.15" cy="10.2" r=".55" fill="#3a3f4d"/><circle cx="23.62" cy="10.2" r=".55" fill="#3a3f4d"/><circle cx="25.09" cy="10.2" r=".55" fill="#3a3f4d"/><circle cx="26.56" cy="10.2" r=".55" fill="#3a3f4d"/><circle cx="28.03" cy="10.2" r=".55" fill="#3a3f4d"/><circle cx="29.5" cy="10.2" r=".55" fill="#3a3f4d"/><circle cx="31.0" cy="9.9" r=".55" fill="#3a3f4d"/><circle cx="32.58" cy="9.9" r=".55" fill="#3a3f4d"/><circle cx="34.17" cy="9.9" r=".55" fill="#3a3f4d"/><circle cx="35.75" cy="9.9" r=".55" fill="#3a3f4d"/><circle cx="37.33" cy="9.9" r=".55" fill="#3a3f4d"/><circle cx="38.92" cy="9.9" r=".55" fill="#3a3f4d"/><circle cx="40.5" cy="9.9" r=".55" fill="#3a3f4d"/><circle cx="41.4" cy="6.2" r=".55" fill="#3a3f4d"/><circle cx="42.8" cy="6.3" r=".55" fill="#3a3f4d"/><circle cx="44.4" cy="8.4" r=".55" fill="#3a3f4d"/><circle cx="62.4" cy="9.8" r=".55" fill="#3a3f4d"/><circle cx="63.6" cy="9" r=".55" fill="#3a3f4d"/><circle cx="65" cy="10" r=".55" fill="#3a3f4d"/><circle cx="67" cy="10" r=".55" fill="#3a3f4d"/><circle cx="68.5" cy="10" r=".55" fill="#3a3f4d"/><circle cx="70" cy="10" r=".55" fill="#3a3f4d"/><circle cx="73" cy="10" r=".55" fill="#3a3f4d"/><circle cx="76" cy="10" r=".55" fill="#3a3f4d"/><circle cx="79.5" cy="10" r=".55" fill="#3a3f4d"/><circle cx="82.6" cy="10" r=".55" fill="#3a3f4d"/></svg>
<svg style="left:920px;top:215px;" width="90" height="20" viewBox="0 0 90 20"><path d="M4.5 6.7 L6.0 6.7 L7.5 6.7 L9.0 6.7 L10.5 6.7 L12.0 6.7 L13.5 6.7 L15.0 6.7 L16.5 6.7 L18.0 6.7 L19.5 6.7 L21.0 6.7 L22.5 6.7 L24.0 6.7 L25.5 6.7 L27.0 6.7 L28.5 6.7 L30.0 6.7 L31.5 6.7 L33.0 6.7 L34.5 6.7 L36.0 6.7 L37.5 6.7 L39.0 6.7 L40.5 6.7 L42.0 6.7 L43.5 6.7 L45.0 6.7 L62.4 7.5 L63.6 7.6 L65 7.7 L67 7.7 L68.5 7.7 L70 7.7 L73 7.7 L76 7.7 L79.5 7.7 L82.6 7.7 L82.6 16 L4.5 16 Z" fill="#f2f3f5"/><path d="M4.5 6.7 L6.0 6.7 L7.5 6.7 L9.0 6.7 L10.5 6.7 L12.0 6.7 L13.5 6.7 L15.0 6.7 L16.5 6.7 L18.0 6.7 L19.5 6.7 L21.0 6.7 L22.5 6.7 L24.0 6.7 L25.5 6.7 L27.0 6.7 L28.5 6.7 L30.0 6.7 L31.5 6.7 L33.0 6.7 L34.5 6.7 L36.0 6.7 L37.5 6.7 L39.0 6.7 L40.5 6.7 L42.0 6.7 L43.5 6.7 L45.0 6.7 L62.4 7.5 L63.6 7.6 L65 7.7 L67 7.7 L68.5 7.7 L70 7.7 L73 7.7 L76 7.7 L79.5 7.7 L82.6 7.7" fill="none" stroke="#3a3f4d" stroke-width=".5"/><circle cx="4.5" cy="6.7" r=".55" fill="#3a3f4d"/><circle cx="6.0" cy="6.7" r=".55" fill="#3a3f4d"/><circle cx="7.5" cy="6.7" r=".55" fill="#3a3f4d"/><circle cx="9.0" cy="6.7" r=".55" fill="#3a3f4d"/><circle cx="10.5" cy="6.7" r=".55" fill="#3a3f4d"/><circle cx="12.0" cy="6.7" r=".55" fill="#3a3f4d"/><circle cx="13.5" cy="6.7" r=".55" fill="#3a3f4d"/><circle cx="15.0" cy="6.7" r=".55" fill="#3a3f4d"/><circle cx="16.5" cy="6.7" r=".55" fill="#3a3f4d"/><circle cx="18.0" cy="6.7" r=".55" fill="#3a3f4d"/><circle cx="19.5" cy="6.7" r=".55" fill="#3a3f4d"/><circle cx="21.0" cy="6.7" r=".55" fill="#3a3f4d"/><circle cx="22.5" cy="6.7" r=".55" fill="#3a3f4d"/><circle cx="24.0" cy="6.7" r=".55" fill="#3a3f4d"/><circle cx="25.5" cy="6.7" r=".55" fill="#3a3f4d"/><circle cx="27.0" cy="6.7" r=".55" fill="#3a3f4d"/><circle cx="28.5" cy="6.7" r=".55" fill="#3a3f4d"/><circle cx="30.0" cy="6.7" r=".55" fill="#3a3f4d"/><circle cx="31.5" cy="6.7" r=".55" fill="#3a3f4d"/><circle cx="33.0" cy="6.7" r=".55" fill="#3a3f4d"/><circle cx="34.5" cy="6.7" r=".55" fill="#3a3f4d"/><circle cx="36.0" cy="6.7" r=".55" fill="#3a3f4d"/><circle cx="37.5" cy="6.7" r=".55" fill="#3a3f4d"/><circle cx="39.0" cy="6.7" r=".55" fill="#3a3f4d"/><circle cx="40.5" cy="6.7" r=".55" fill="#3a3f4d"/><circle cx="42.0" cy="6.7" r=".55" fill="#3a3f4d"/><circle cx="43.5" cy="6.7" r=".55" fill="#3a3f4d"/><circle cx="45.0" cy="6.7" r=".55" fill="#3a3f4d"/><circle cx="62.4" cy="7.5" r=".55" fill="#3a3f4d"/><circle cx="63.6" cy="7.6" r=".55" fill="#3a3f4d"/><circle cx="65" cy="7.7" r=".55" fill="#3a3f4d"/><circle cx="67" cy="7.7" r=".55" fill="#3a3f4d"/><circle cx="68.5" cy="7.7" r=".55" fill="#3a3f4d"/><circle cx="70" cy="7.7" r=".55" fill="#3a3f4d"/><circle cx="73" cy="7.7" r=".55" fill="#3a3f4d"/><circle cx="76" cy="7.7" r=".55" fill="#3a3f4d"/><circle cx="79.5" cy="7.7" r=".55" fill="#3a3f4d"/><circle cx="82.6" cy="7.7" r=".55" fill="#3a3f4d"/></svg>
<svg style="left:920px;top:245px;" width="90" height="20" viewBox="0 0 90 20"><path d="M4.5 11.7 L6.0 11.7 L7.5 11.7 L9.0 11.7 L10.5 11.7 L12.0 11.7 L13.5 11.7 L15.0 11.7 L16.5 11.7 L18.0 11.7 L19.5 11.1 L21.0 11.1 L22.5 11.1 L24.0 11.1 L25.5 11.1 L27.0 11.1 L28.5 11.1 L30.0 11.1 L31.5 11.1 L33.0 11.1 L34.5 11.1 L36.0 11.1 L37.5 11.1 L39.0 11.1 L40.5 11.1 L41.4 6.4 L42.6 11 L44.5 11.2 L62.4 11.2 L63.6 11.2 L65 11.2 L67 11.2 L68.5 11.2 L70 11.2 L73 11.2 L76 11.2 L79.5 11.2 L82.6 11.2 L82.6 16.3 L4.5 16.3 Z" fill="#f2f3f5"/><path d="M4.5 11.7 L6.0 11.7 L7.5 11.7 L9.0 11.7 L10.5 11.7 L12.0 11.7 L13.5 11.7 L15.0 11.7 L16.5 11.7 L18.0 11.7 L19.5 11.1 L21.0 11.1 L22.5 11.1 L24.0 11.1 L25.5 11.1 L27.0 11.1 L28.5 11.1 L30.0 11.1 L31.5 11.1 L33.0 11.1 L34.5 11.1 L36.0 11.1 L37.5 11.1 L39.0 11.1 L40.5 11.1 L41.4 6.4 L42.6 11 L44.5 11.2 L62.4 11.2 L63.6 11.2 L65 11.2 L67 11.2 L68.5 11.2 L70 11.2 L73 11.2 L76 11.2 L79.5 11.2 L82.6 11.2" fill="none" stroke="#3a3f4d" stroke-width=".5"/><circle cx="4.5" cy="11.7" r=".55" fill="#3a3f4d"/><circle cx="6.0" cy="11.7" r=".55" fill="#3a3f4d"/><circle cx="7.5" cy="11.7" r=".55" fill="#3a3f4d"/><circle cx="9.0" cy="11.7" r=".55" fill="#3a3f4d"/><circle cx="10.5" cy="11.7" r=".55" fill="#3a3f4d"/><circle cx="12.0" cy="11.7" r=".55" fill="#3a3f4d"/><circle cx="13.5" cy="11.7" r=".55" fill="#3a3f4d"/><circle cx="15.0" cy="11.7" r=".55" fill="#3a3f4d"/><circle cx="16.5" cy="11.7" r=".55" fill="#3a3f4d"/><circle cx="18.0" cy="11.7" r=".55" fill="#3a3f4d"/><circle cx="19.5" cy="11.1" r=".55" fill="#3a3f4d"/><circle cx="21.0" cy="11.1" r=".55" fill="#3a3f4d"/><circle cx="22.5" cy="11.1" r=".55" fill="#3a3f4d"/><circle cx="24.0" cy="11.1" r=".55" fill="#3a3f4d"/><circle cx="25.5" cy="11.1" r=".55" fill="#3a3f4d"/><circle cx="27.0" cy="11.1" r=".55" fill="#3a3f4d"/><circle cx="28.5" cy="11.1" r=".55" fill="#3a3f4d"/><circle cx="30.0" cy="11.1" r=".55" fill="#3a3f4d"/><circle cx="31.5" cy="11.1" r=".55" fill="#3a3f4d"/><circle cx="33.0" cy="11.1" r=".55" fill="#3a3f4d"/><circle cx="34.5" cy="11.1" r=".55" fill="#3a3f4d"/><circle cx="36.0" cy="11.1" r=".55" fill="#3a3f4d"/><circle cx="37.5" cy="11.1" r=".55" fill="#3a3f4d"/><circle cx="39.0" cy="11.1" r=".55" fill="#3a3f4d"/><circle cx="40.5" cy="11.1" r=".55" fill="#3a3f4d"/><circle cx="41.4" cy="6.4" r=".55" fill="#3a3f4d"/><circle cx="42.6" cy="11" r=".55" fill="#3a3f4d"/><circle cx="44.5" cy="11.2" r=".55" fill="#3a3f4d"/><circle cx="62.4" cy="11.2" r=".55" fill="#3a3f4d"/><circle cx="63.6" cy="11.2" r=".55" fill="#3a3f4d"/><circle cx="65" cy="11.2" r=".55" fill="#3a3f4d"/><circle cx="67" cy="11.2" r=".55" fill="#3a3f4d"/><circle cx="68.5" cy="11.2" r=".55" fill="#3a3f4d"/><circle cx="70" cy="11.2" r=".55" fill="#3a3f4d"/><circle cx="73" cy="11.2" r=".55" fill="#3a3f4d"/><circle cx="76" cy="11.2" r=".55" fill="#3a3f4d"/><circle cx="79.5" cy="11.2" r=".55" fill="#3a3f4d"/><circle cx="82.6" cy="11.2" r=".55" fill="#3a3f4d"/></svg>
<svg style="left:920px;top:275px;" width="90" height="20" viewBox="0 0 90 20"><path d="M4.5 7.4 L6.0 7.4 L7.5 7.4 L9.0 7.4 L10.5 7.4 L12.0 7.4 L13.5 7.4 L15.0 7.4 L16.5 7.4 L18.0 7.4 L19.5 7.4 L21.0 7.4 L22.5 7.4 L24.0 7.4 L25.5 7.4 L27.0 7.4 L28.5 7.4 L30.0 7.4 L31.5 7.4 L33.0 7.4 L34.5 7.4 L36.0 7.4 L37.5 7.4 L39.0 7.4 L40.5 7.4 L42.0 7.4 L43.5 7.4 L45.0 7.4 L62.4 7.4 L63.6 7.4 L65 7.4 L67 7.4 L68.5 7.4 L70 7.4 L73 7.4 L76 7.4 L79.5 7.4 L82.6 7.4 L82.6 16.4 L4.5 16.4 Z" fill="#f2f3f5"/><path d="M4.5 7.4 L6.0 7.4 L7.5 7.4 L9.0 7.4 L10.5 7.4 L12.0 7.4 L13.5 7.4 L15.0 7.4 L16.5 7.4 L18.0 7.4 L19.5 7.4 L21.0 7.4 L22.5 7.4 L24.0 7.4 L25.5 7.4 L27.0 7.4 L28.5 7.4 L30.0 7.4 L31.5 7.4 L33.0 7.4 L34.5 7.4 L36.0 7.4 L37.5 7.4 L39.0 7.4 L40.5 7.4 L42.0 7.4 L43.5 7.4 L45.0 7.4 L62.4 7.4 L63.6 7.4 L65 7.4 L67 7.4 L68.5 7.4 L70 7.4 L73 7.4 L76 7.4 L79.5 7.4 L82.6 7.4" fill="none" stroke="#3a3f4d" stroke-width=".5"/><circle cx="4.5" cy="7.4" r=".55" fill="#3a3f4d"/><circle cx="6.0" cy="7.4" r=".55" fill="#3a3f4d"/><circle cx="7.5" cy="7.4" r=".55" fill="#3a3f4d"/><circle cx="9.0" cy="7.4" r=".55" fill="#3a3f4d"/><circle cx="10.5" cy="7.4" r=".55" fill="#3a3f4d"/><circle cx="12.0" cy="7.4" r=".55" fill="#3a3f4d"/><circle cx="13.5" cy="7.4" r=".55" fill="#3a3f4d"/><circle cx="15.0" cy="7.4" r=".55" fill="#3a3f4d"/><circle cx="16.5" cy="7.4" r=".55" fill="#3a3f4d"/><circle cx="18.0" cy="7.4" r=".55" fill="#3a3f4d"/><circle cx="19.5" cy="7.4" r=".55" fill="#3a3f4d"/><circle cx="21.0" cy="7.4" r=".55" fill="#3a3f4d"/><circle cx="22.5" cy="7.4" r=".55" fill="#3a3f4d"/><circle cx="24.0" cy="7.4" r=".55" fill="#3a3f4d"/><circle cx="25.5" cy="7.4" r=".55" fill="#3a3f4d"/><circle cx="27.0" cy="7.4" r=".55" fill="#3a3f4d"/><circle cx="28.5" cy="7.4" r=".55" fill="#3a3f4d"/><circle cx="30.0" cy="7.4" r=".55" fill="#3a3f4d"/><circle cx="31.5" cy="7.4" r=".55" fill="#3a3f4d"/><circle cx="33.0" cy="7.4" r=".55" fill="#3a3f4d"/><circle cx="34.5" cy="7.4" r=".55" fill="#3a3f4d"/><circle cx="36.0" cy="7.4" r=".55" fill="#3a3f4d"/><circle cx="37.5" cy="7.4" r=".55" fill="#3a3f4d"/><circle cx="39.0" cy="7.4" r=".55" fill="#3a3f4d"/><circle cx="40.5" cy="7.4" r=".55" fill="#3a3f4d"/><circle cx="42.0" cy="7.4" r=".55" fill="#3a3f4d"/><circle cx="43.5" cy="7.4" r=".55" fill="#3a3f4d"/><circle cx="45.0" cy="7.4" r=".55" fill="#3a3f4d"/><circle cx="62.4" cy="7.4" r=".55" fill="#3a3f4d"/><circle cx="63.6" cy="7.4" r=".55" fill="#3a3f4d"/><circle cx="65" cy="7.4" r=".55" fill="#3a3f4d"/><circle cx="67" cy="7.4" r=".55" fill="#3a3f4d"/><circle cx="68.5" cy="7.4" r=".55" fill="#3a3f4d"/><circle cx="70" cy="7.4" r=".55" fill="#3a3f4d"/><circle cx="73" cy="7.4" r=".55" fill="#3a3f4d"/><circle cx="76" cy="7.4" r=".55" fill="#3a3f4d"/><circle cx="79.5" cy="7.4" r=".55" fill="#3a3f4d"/><circle cx="82.6" cy="7.4" r=".55" fill="#3a3f4d"/></svg>
<svg style="left:920px;top:305px;" width="90" height="20" viewBox="0 0 90 20"><path d="M4.5 16.8 L5.97 16.8 L7.44 16.8 L8.91 16.8 L10.38 16.8 L11.85 16.8 L13.32 16.8 L14.79 16.8 L16.26 16.8 L17.74 16.8 L19.21 16.8 L20.68 16.8 L22.15 16.8 L23.62 16.8 L25.09 16.8 L26.56 16.8 L28.03 16.8 L29.5 16.8 L31.0 16.3 L32.58 16.3 L34.17 16.3 L35.75 16.3 L37.33 16.3 L38.92 16.3 L40.5 16.3 L41.8 8.5 L43 6.4 L44.5 7.5 L62.4 16.3 L63.6 15.4 L65 15.4 L67 15.4 L68.5 15.4 L70 15.4 L73 15.4 L76 15.4 L79.5 15.4 L82.6 15.4 L82.6 17.3 L4.5 17.3 Z" fill="#f2f3f5"/><path d="M4.5 16.8 L5.97 16.8 L7.44 16.8 L8.91 16.8 L10.38 16.8 L11.85 16.8 L13.32 16.8 L14.79 16.8 L16.26 16.8 L17.74 16.8 L19.21 16.8 L20.68 16.8 L22.15 16.8 L23.62 16.8 L25.09 16.8 L26.56 16.8 L28.03 16.8 L29.5 16.8 L31.0 16.3 L32.58 16.3 L34.17 16.3 L35.75 16.3 L37.33 16.3 L38.92 16.3 L40.5 16.3 L41.8 8.5 L43 6.4 L44.5 7.5 L62.4 16.3 L63.6 15.4 L65 15.4 L67 15.4 L68.5 15.4 L70 15.4 L73 15.4 L76 15.4 L79.5 15.4 L82.6 15.4" fill="none" stroke="#3a3f4d" stroke-width=".5"/><circle cx="4.5" cy="16.8" r=".55" fill="#3a3f4d"/><circle cx="5.97" cy="16.8" r=".55" fill="#3a3f4d"/><circle cx="7.44" cy="16.8" r=".55" fill="#3a3f4d"/><circle cx="8.91" cy="16.8" r=".55" fill="#3a3f4d"/><circle cx="10.38" cy="16.8" r=".55" fill="#3a3f4d"/><circle cx="11.85" cy="16.8" r=".55" fill="#3a3f4d"/><circle cx="13.32" cy="16.8" r=".55" fill="#3a3f4d"/><circle cx="14.79" cy="16.8" r=".55" fill="#3a3f4d"/><circle cx="16.26" cy="16.8" r=".55" fill="#3a3f4d"/><circle cx="17.74" cy="16.8" r=".55" fill="#3a3f4d"/><circle cx="19.21" cy="16.8" r=".55" fill="#3a3f4d"/><circle cx="20.68" cy="16.8" r=".55" fill="#3a3f4d"/><circle cx="22.15" cy="16.8" r=".55" fill="#3a3f4d"/><circle cx="23.62" cy="16.8" r=".55" fill="#3a3f4d"/><circle cx="25.09" cy="16.8" r=".55" fill="#3a3f4d"/><circle cx="26.56" cy="16.8" r=".55" fill="#3a3f4d"/><circle cx="28.03" cy="16.8" r=".55" fill="#3a3f4d"/><circle cx="29.5" cy="16.8" r=".55" fill="#3a3f4d"/><circle cx="31.0" cy="16.3" r=".55" fill="#3a3f4d"/><circle cx="32.58" cy="16.3" r=".55" fill="#3a3f4d"/><circle cx="34.17" cy="16.3" r=".55" fill="#3a3f4d"/><circle cx="35.75" cy="16.3" r=".55" fill="#3a3f4d"/><circle cx="37.33" cy="16.3" r=".55" fill="#3a3f4d"/><circle cx="38.92" cy="16.3" r=".55" fill="#3a3f4d"/><circle cx="40.5" cy="16.3" r=".55" fill="#3a3f4d"/><circle cx="41.8" cy="8.5" r=".55" fill="#3a3f4d"/><circle cx="43" cy="6.4" r=".55" fill="#3a3f4d"/><circle cx="44.5" cy="7.5" r=".55" fill="#3a3f4d"/><circle cx="62.4" cy="16.3" r=".55" fill="#3a3f4d"/><circle cx="63.6" cy="15.4" r=".55" fill="#3a3f4d"/><circle cx="65" cy="15.4" r=".55" fill="#3a3f4d"/><circle cx="67" cy="15.4" r=".55" fill="#3a3f4d"/><circle cx="68.5" cy="15.4" r=".55" fill="#3a3f4d"/><circle cx="70" cy="15.4" r=".55" fill="#3a3f4d"/><circle cx="73" cy="15.4" r=".55" fill="#3a3f4d"/><circle cx="76" cy="15.4" r=".55" fill="#3a3f4d"/><circle cx="79.5" cy="15.4" r=".55" fill="#3a3f4d"/><circle cx="82.6" cy="15.4" r=".55" fill="#3a3f4d"/></svg>
<div class="card" style="left:192.0px;top:348px;width:131px;height:57px"></div>
<div class="t" style="top:353px;font-size:8.6px;color:#1f2433;font-weight:700;left:199.6px;">Availability</div>
<div class="t" style="top:363px;font-size:4.8px;color:#8a8f9c;left:199.6px;">SCORE</div>
<div class="t" style="right:712.3px;top:351.79999999999995px;height:12px;line-height:12px;font-size:9.300px;color:#8a8f9c;text-align:right"><span style="color:#e0454c;font-weight:700;font-size:9.900px">64</span> / 100</div>
<div class="t" style="top:363px;font-size:6.9px;color:#d9434b;font-weight:700;right:712.3px;text-align:right;">2%</div>
<svg style="left:293.7px;top:364.5px;" width="5" height="6" viewBox="0 0 5 6"><path d="M2.500 .4v4.600M.6 3.200l1.900 1.900 1.900-1.900" fill="none" stroke="#d9434b" stroke-width="1" stroke-linecap="round" stroke-linejoin="round"/></svg>
<svg style="left:199.7px;top:376px;" width="115.5" height="22" viewBox="0 0 115.5 22"><path d="M0 9.7 L37 9.7 L45 10.3 L53 11 L56 13.5 L58 13.7 L84 10.6 L115.5 10.6 L115.5 22 L0 22 Z" fill="#fac9cc"/><path d="M0 9.7 L37 9.7 L45 10.3 L53 11 L56 13.5 L58 13.7 L84 10.6 L115.5 10.6" fill="none" stroke="#e2555c" stroke-width="1"/><path d="M0 8.5H115.500" stroke="#3a3f4d" stroke-width="1.150" stroke-dasharray="6 2.800"/></svg>
<div class="card" style="left:330.6px;top:348px;width:131px;height:57px"></div>
<div class="t" style="top:353px;font-size:8.6px;color:#1f2433;font-weight:700;left:338.20000000000005px;">Indexability</div>
<div class="t" style="top:363px;font-size:4.8px;color:#8a8f9c;left:338.20000000000005px;">SCORE</div>
<div class="t" style="right:573.7px;top:351.79999999999995px;height:12px;line-height:12px;font-size:9.300px;color:#8a8f9c;text-align:right"><span style="color:#e0454c;font-weight:700;font-size:9.900px">78</span> / 100</div>
<div class="t" style="top:363px;font-size:6.9px;color:#3a3f4d;font-weight:700;right:573.7px;text-align:right;">0%</div>
<div class="a" style="left:433.90000000000003px;top:367.3px;width:5px;height:1px;background:#3a3f4d;"></div>
<svg style="left:338.3px;top:376px;" width="115.5" height="22" viewBox="0 0 115.5 22"><path d="M0 5.4 L20 6 L34 6.4 L36.5 5 L39 6.2 L53 6.2 L56 8.5 L60 9 L77 9 L85.5 6.3 L87 6.5 L88.5 8.5 L115.5 8.5 L115.5 22 L0 22 Z" fill="#fac9cc"/><path d="M0 5.4 L20 6 L34 6.4 L36.5 5 L39 6.2 L53 6.2 L56 8.5 L60 9 L77 9 L85.5 6.3 L87 6.5 L88.5 8.5 L115.5 8.5" fill="none" stroke="#e2555c" stroke-width="1"/><path d="M0 8.5H115.500" stroke="#3a3f4d" stroke-width="1.150" stroke-dasharray="6 2.800"/></svg>
<div class="card" style="left:469.2px;top:348px;width:131px;height:57px"></div>
<div class="t" style="top:353px;font-size:8.6px;color:#1f2433;font-weight:700;left:476.8px;">Uniqueness</div>
<div class="t" style="top:363px;font-size:4.8px;color:#8a8f9c;left:476.8px;">SCORE</div>
<div class="t" style="right:435.1px;top:351.79999999999995px;height:12px;line-height:12px;font-size:9.300px;color:#8a8f9c;text-align:right"><span style="color:#2e9e6a;font-weight:700;font-size:9.900px">93</span> / 100</div>
<div class="t" style="top:363px;font-size:6.9px;color:#2e9e6a;font-weight:700;right:435.1px;text-align:right;">1%</div>
<svg style="left:571.6px;top:364.5px;" width="5" height="6" viewBox="0 0 5 6"><path d="M2.500 5.600V1M.6 2.800L2.500 .9l1.900 1.900" fill="none" stroke="#2e9e6a" stroke-width="1" stroke-linecap="round" stroke-linejoin="round"/></svg>
<svg style="left:476.9px;top:376px;" width="115.5" height="22" viewBox="0 0 115.5 22"><path d="M0 13.6 L61 13.6 L86 6.5 L115.5 5.4 L115.5 22 L0 22 Z" fill="#a8efcd"/><path d="M0 13.6 L61 13.6 L86 6.5 L115.5 5.4" fill="none" stroke="#3bb782" stroke-width="1"/><path d="M53.500 13.700l1.500 3.500 1.500-3.500z" fill="#dff7ec" stroke="#3bb782" stroke-width=".5"/><path d="M0 13.2H115.500" stroke="#3a3f4d" stroke-width="1.150" stroke-dasharray="6 2.800"/></svg>
<div class="card" style="left:607.8px;top:348px;width:131px;height:57px"></div>
<div class="t" style="top:353px;font-size:8.6px;color:#1f2433;font-weight:700;left:615.4px;">Discoverability</div>
<div class="t" style="top:363px;font-size:4.8px;color:#8a8f9c;left:615.4px;">SCORE</div>
<div class="t" style="right:296.5px;top:351.79999999999995px;height:12px;line-height:12px;font-size:9.300px;color:#8a8f9c;text-align:right"><span style="color:#2e9e6a;font-weight:700;font-size:9.900px">83</span> / 100</div>
<div class="t" style="top:363px;font-size:6.9px;color:#d9434b;font-weight:700;right:296.5px;text-align:right;">2%</div>
<svg style="left:709.5px;top:364.5px;" width="5" height="6" viewBox="0 0 5 6"><path d="M2.500 .4v4.600M.6 3.200l1.900 1.900 1.900-1.900" fill="none" stroke="#d9434b" stroke-width="1" stroke-linecap="round" stroke-linejoin="round"/></svg>
<svg style="left:615.5px;top:376px;" width="115.5" height="22" viewBox="0 0 115.5 22"><path d="M0 6.5 L20 6.4 L24 5.6 L33 5.5 L38 6.4 L115.5 6.5 L115.5 22 L0 22 Z" fill="#a8efcd"/><path d="M0 6.5 L20 6.4 L24 5.6 L33 5.5 L38 6.4 L115.5 6.5" fill="none" stroke="#3bb782" stroke-width="1"/><path d="M0 8.5H115.500" stroke="#3a3f4d" stroke-width="1.150" stroke-dasharray="6 2.800"/></svg>
<div class="card" style="left:746.4px;top:348px;width:131px;height:57px"></div>
<div class="t" style="top:353px;font-size:8.6px;color:#1f2433;font-weight:700;left:754.0px;">Rankability</div>
<div class="t" style="top:363px;font-size:4.8px;color:#8a8f9c;left:754.0px;">SCORE</div>
<div class="t" style="right:157.9px;top:351.79999999999995px;height:12px;line-height:12px;font-size:9.300px;color:#8a8f9c;text-align:right"><span style="color:#e0454c;font-weight:700;font-size:9.900px">54</span> / 100</div>
<div class="t" style="top:363px;font-size:6.9px;color:#3a3f4d;font-weight:700;right:157.89999999999998px;text-align:right;">0%</div>
<div class="a" style="left:849.7px;top:367.3px;width:5px;height:1px;background:#3a3f4d;"></div>
<svg style="left:754.1px;top:376px;" width="115.5" height="22" viewBox="0 0 115.5 22"><path d="M0 12.2 L20 12.2 L24 13.4 L88 13.4 L92 12.8 L115.5 12.8 L115.5 22 L0 22 Z" fill="#fac9cc"/><path d="M0 12.2 L20 12.2 L24 13.4 L88 13.4 L92 12.8 L115.5 12.8" fill="none" stroke="#e2555c" stroke-width="1"/><path d="M0 11.7H115.500" stroke="#3a3f4d" stroke-width="1.150" stroke-dasharray="6 2.800"/></svg>
<div class="card" style="left:885.0px;top:348px;width:131px;height:57px"></div>
<div class="t" style="top:353px;font-size:8.6px;color:#1f2433;font-weight:700;left:892.6px;">Experience</div>
<div class="t" style="top:363px;font-size:4.8px;color:#8a8f9c;left:892.6px;">SCORE</div>
<div class="t" style="right:19.3px;top:351.79999999999995px;height:12px;line-height:12px;font-size:9.300px;color:#8a8f9c;text-align:right"><span style="color:#e0454c;font-weight:700;font-size:9.900px">65</span> / 100</div>
<div class="t" style="top:363px;font-size:6.9px;color:#3a3f4d;font-weight:700;right:19.299999999999955px;text-align:right;">0%</div>
<div class="a" style="left:988.3000000000001px;top:367.3px;width:5px;height:1px;background:#3a3f4d;"></div>
<svg style="left:892.7px;top:376px;" width="115.5" height="22" viewBox="0 0 115.5 22"><path d="M0 9.2 L15 9.2 L19.5 7.7 L30 7.3 L34.5 6.6 L38 6.8 L42 8.2 L87 8.5 L90 9.5 L101 11.2 L115.5 10.7 L115.5 22 L0 22 Z" fill="#fac9cc"/><path d="M0 9.2 L15 9.2 L19.5 7.7 L30 7.3 L34.5 6.6 L38 6.8 L42 8.2 L87 8.5 L90 9.5 L101 11.2 L115.5 10.7" fill="none" stroke="#e2555c" stroke-width="1"/><path d="M0 9.5H115.500" stroke="#3a3f4d" stroke-width="1.150" stroke-dasharray="6 2.800"/></svg>
<div class="card" style="left:192px;top:413.500px;width:824px;height:180px"></div>
<div class="t" style="top:425px;font-size:10.9px;color:#262b3a;left:205.6px;line-height:13px;height:13px;margin-top:-1.500px;-webkit-text-stroke:.2px #262b3a;">Traffic Funnel</div>
<svg style="left:274.8px;top:425px;" width="10" height="10" viewBox="0 0 10 10"><circle cx="5" cy="5" r="4.4" fill="none" stroke="#3a3f4d" stroke-width=".7"/><path d="M5 4.500v2.600" stroke="#3a3f4d" stroke-width=".9" stroke-linecap="round"/><circle cx="5" cy="3" r=".55" fill="#3a3f4d"/></svg>
<div class="a" style="left:897.3px;top:423.6px;width:24px;height:12.9px;background:#8b5cf6;border-radius:6.500px;"></div>
<div class="a" style="left:909.4px;top:424.8px;width:10.5px;height:10.5px;background:#fff;border-radius:50%;"></div>
<div class="t" style="top:426px;font-size:7.9px;color:#262b3a;left:925.9px;">Proportional Bars</div>
<svg style="left:992.5px;top:424.8px;" width="10" height="10" viewBox="0 0 10 10"><circle cx="5" cy="5" r="4.2" fill="none" stroke="#4a4f5e" stroke-width=".7"/><path d="M5 4.500v2.600" stroke="#4a4f5e" stroke-width=".9" stroke-linecap="round"/><circle cx="5" cy="3" r=".55" fill="#4a4f5e"/></svg>
<div class="t" style="top:452px;font-size:8.7px;color:#1f2433;font-weight:700;left:110.60000000000002px;width:300px;text-align:center;">Availability</div>
<div class="t" style="top:452px;font-size:8.7px;color:#1f2433;font-weight:700;left:247.8px;width:300px;text-align:center;">Indexability</div>
<div class="t" style="top:452px;font-size:8.7px;color:#1f2433;font-weight:700;left:385.1px;width:300px;text-align:center;">Uniqueness</div>
<div class="t" style="top:452px;font-size:8.7px;color:#1f2433;font-weight:700;left:522.4px;width:300px;text-align:center;">Discoverability</div>
<div class="t" style="top:452px;font-size:8.7px;color:#1f2433;font-weight:700;left:659.7px;width:300px;text-align:center;">Rankability</div>
<div class="t" style="top:452px;font-size:8.7px;color:#1f2433;font-weight:700;left:797px;width:300px;text-align:center;">Experience</div>
<div class="t" style="top:469px;font-size:8.7px;color:#7d828f;letter-spacing:0.05px;left:110.60000000000002px;width:300px;text-align:center;">Non-200 Pages</div>
<div class="t" style="top:483px;font-size:8.5px;color:#454a58;font-weight:700;left:110.39999999999998px;width:300px;text-align:center;">4.2K</div>
<div class="t" style="top:502px;font-size:8.7px;color:#7d828f;letter-spacing:0.05px;left:247.7px;width:300px;text-align:center;">Non-Indexable Pages</div>
<div class="t" style="top:517px;font-size:8.5px;color:#454a58;font-weight:700;left:247.8px;width:300px;text-align:center;">7.4K</div>
<div class="t" style="top:561px;font-size:8.7px;color:#7d828f;letter-spacing:0.05px;left:385.4px;width:300px;text-align:center;">Non-Primary Pages</div>
<div class="t" style="top:575px;font-size:8.5px;color:#454a58;font-weight:700;left:385px;width:300px;text-align:center;">1K</div>
<div class="t" style="top:563px;font-size:8.55px;color:#7d828f;left:522.4px;width:300px;text-align:center;">Primary Pages not in</div>
<div class="t" style="top:574px;font-size:8.55px;color:#7d828f;left:522.4px;width:300px;text-align:center;">SERP</div>
<div class="t" style="top:565px;font-size:8.55px;color:#7d828f;left:659.9px;width:300px;text-align:center;">Primary Pages in SERP</div>
<div class="t" style="top:576px;font-size:8.55px;color:#7d828f;left:659.9px;width:300px;text-align:center;">without Clicks</div>
<div class="t" style="top:573px;font-size:8.55px;color:#7d828f;left:797.2px;width:300px;text-align:center;">Poor UX Pages with</div>
<svg style="left:192px;top:413.5px;" width="824" height="166.5" viewBox="0 0 824 166.5"><path d="M0 90.500H112V166.500H0z" fill="#dbe9fe"/><path d="M0 90.500C40 90.500 70 112 112 124.800V166.500H0z" fill="#bfdbfe"/><path d="M137.500 124.500H248V166.500H137.500z" fill="#dbe9fe"/><path d="M137.500 124.500C165 124.500 185 138 222.800 166.500H137.500z" fill="#bfdbfe"/><rect x="110.400" y="90.600" width="27.300" height="32.800" rx="3" fill="#7dd3fc"/><rect x="110.400" y="124.400" width="27.300" height="60" rx="3" fill="#2563eb"/><rect x="247" y="124.100" width="27.600" height="60" rx="3" fill="#7dd3fc"/><rect x="112.300" y="158.300" width="23.400" height="12" fill="#fff"/><path d="M114.200 61H123.600V90.300" fill="none" stroke="#a0a5b1" stroke-width=".7" stroke-dasharray="1.400 1.100"/><path d="M251.800 94.600H261.100V123.500" fill="none" stroke="#a0a5b1" stroke-width=".7" stroke-dasharray="1.400 1.100"/><path d="M389.300 153.400H398V166.500" fill="none" stroke="#a0a5b1" stroke-width=".7" stroke-dasharray="1.400 1.100"/><path d="M526 161.300H536.400V166.500" fill="none" stroke="#a0a5b1" stroke-width=".7" stroke-dasharray="1.400 1.100"/><path d="M664.700 163.300H673V166.500" fill="none" stroke="#a0a5b1" stroke-width=".7" stroke-dasharray="1.400 1.100"/></svg>
<div class="t" style="top:575px;font-size:7px;color:#4f46e5;font-weight:700;left:166px;width:300px;text-align:center;">71%</div>
</div>
</body>
</html>
